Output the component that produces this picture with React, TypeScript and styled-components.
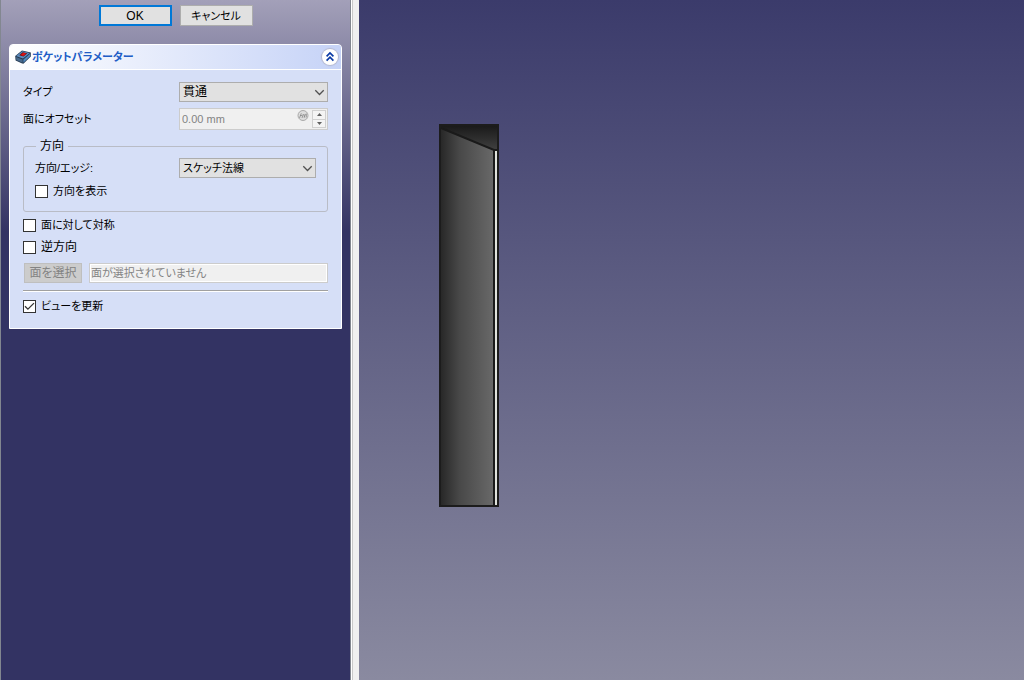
import React, { useState } from 'react';
import styled, { createGlobalStyle } from 'styled-components';

const Global = createGlobalStyle`
  * { box-sizing: border-box; }
  body {
    margin: 0;
    font-family: "Liberation Sans", "Noto Sans CJK JP", sans-serif;
    font-size: 11px;
    line-height: 16px;
    font-feature-settings: "palt";
    color: #000;
  }
  button, input, select {
    font: inherit;
    font-feature-settings: inherit;
    color: inherit;
    margin: 0;
  }
`;

const Window = styled.div`
  display: grid;
  grid-template-columns: minmax(300px, 351px) 8px minmax(0, 1fr);
  min-height: 100vh;
`;

const Sidebar = styled.aside`
  border-left: 1px solid #828790;
  border-right: 1px solid #828790;
  padding: 5px 8px 16px;
  background: linear-gradient(#a3a0b9 0, #333363 232px);
`;

const Splitter = styled.div`
  background: #f0f0f0;
  border-left: 1px solid #fff;
  box-shadow: inset 1px 0 #c8c8c8;
`;

const DialogButtons = styled.div`
  display: flex;
  justify-content: center;
  gap: 8px;
  margin-bottom: 18px;
`;

const PushButton = styled.button<{ $primary?: boolean }>`
  width: 73px;
  height: 21px;
  padding: 0;
  font-size: ${(p) => (p.$primary ? 12 : 11)}px;
  background: #e1e1e1;
  border: ${(p) => (p.$primary ? '2px solid #0078d7' : '1px solid #adadad')};
`;

const Panel = styled.section`
  border: 1px solid #fff;
  border-radius: 4px 4px 0 0;
  background: #d6dff7;
`;

const PanelHeader = styled.header`
  display: flex;
  align-items: center;
  gap: 1px;
  height: 25px;
  padding: 0 3px 0 5px;
  border-bottom: 1px solid #fff;
  border-radius: 3px 3px 0 0;
  background: linear-gradient(90deg, #fff, #c6d3f7);
`;

const PanelTitle = styled.h1`
  flex: 1;
  margin: 0;
  font-size: 11px;
  line-height: 16px;
  font-weight: 700;
  color: #215dc6;
`;

const CollapseButton = styled.button`
  display: flex;
  width: 16px;
  height: 16px;
  padding: 0;
  border: 0;
  border-radius: 50%;
  background: #fff;
  box-shadow: 0 0 1px 1px #b4b8d0;
`;

const Form = styled.form`
  padding: 12px 13px 14px;
`;

const Row = styled.div<{ $gap?: number }>`
  display: grid;
  grid-template-columns: 156px minmax(0, 1fr);
  align-items: center;
  margin-bottom: ${(p) => p.$gap ?? 0}px;
`;

const SelectBox = styled.div`
  display: grid;
  align-items: center;
  > * { grid-area: 1 / 1; }
  > svg { justify-self: end; margin-right: 3px; pointer-events: none; }
`;

const Select = styled.select<{ $large?: boolean }>`
  appearance: none;
  width: 100%;
  height: 20px;
  padding: 0 20px 0 3px;
  font-size: ${(p) => (p.$large ? 12 : 11)}px;
  border: 1px solid #adadad;
  border-radius: 0;
  background: #e1e1e1;
`;

const SpinBox = styled.div`
  display: flex;
  height: 22px;
  padding: 1px;
  border: 1px solid #ccc;
  background: #f0f0f0;
`;

const SpinInput = styled.input`
  flex: 1;
  min-width: 0;
  padding: 0 1px;
  border: 0;
  background: transparent;
  color: #838383;
`;

const SpinButtons = styled.div`
  display: flex;
  flex-direction: column;
  width: 14px;
  margin-left: 3px;
`;

const SpinButton = styled.button`
  display: flex;
  align-items: center;
  justify-content: center;
  flex: 1;
  min-height: 0;
  padding: 0;
  border: 1px solid #d0d0d0;
  background: #f4f4f4;
  & + & { border-top: 0; }
`;

const Group = styled.fieldset`
  min-width: 0;
  margin: 0 0 5px;
  padding: 4px 11px 12px;
  border: 1px solid #b9bcc6;
  border-radius: 3px;
`;

const Legend = styled.legend`
  margin-left: 1px;
  padding: 0 4px;
  font-size: 12px;
`;

const GroupRow = styled(Row)`
  grid-template-columns: 144px minmax(0, 1fr);
`;

const CheckLabel = styled.label<{ $gap?: number; $large?: boolean }>`
  display: flex;
  align-items: center;
  gap: 5px;
  height: 16px;
  margin-bottom: ${(p) => p.$gap ?? 0}px;
  font-size: ${(p) => (p.$large ? 12 : 11)}px;
`;

const CheckFrame = styled.span`
  display: grid;
  > * { grid-area: 1 / 1; }
  > svg { pointer-events: none; }
`;

const CheckInput = styled.input`
  appearance: none;
  width: 13px;
  height: 13px;
  border: 1px solid #333;
  background: #fff;
`;

const FaceRow = styled.div`
  display: flex;
  gap: 7px;
  padding-left: 1px;
`;

const FaceButton = styled.button`
  flex: 0 0 58px;
  height: 20px;
  padding: 0;
  font-size: 12px;
  border: 1px solid #bfbfbf;
  background: #ccc;
  color: #838383;
`;

const FaceInput = styled.input`
  flex: 1;
  min-width: 0;
  height: 20px;
  padding: 0 1px;
  border: 1px solid #ccc;
  background: #f0f0f0;
  box-shadow: inset 0 0 0 1px #fff;
  &::placeholder { color: #838383; opacity: 1; }
`;

const Divider = styled.hr`
  height: 2px;
  margin: 7px 0 6px;
  border: 0;
  border-top: 1px solid #a0a0a0;
  border-bottom: 1px solid #fff;
`;

const Viewport = styled.main`
  padding: 124px 80px;
  background: linear-gradient(#3b3b6b, #8a8aa0);
`;

const Solid = styled.svg`
  display: block;
`;

const Chevron = () => (
  <svg width="11" height="7" viewBox="0 0 11 7" fill="none" stroke="#505050" strokeWidth="1.3">
    <path d="M1.3 1.3 5.5 5.5 9.7 1.3" />
  </svg>
);

const PocketIcon = () => (
  <svg width="16" height="14" viewBox="0 0 16 14">
    <path d="M.2 6 7 .5 15.8 2.4V6.5L8.4 13.7 6.6 13.3.6 10.4Z" fill="#24384f" />
    <path d="M1 6.1 7.2 1.2 14.9 2.9 8 8.6Z" fill="#5b8dbf" />
    <path d="M1 7 7.6 9.6V12.8L1.3 9.9Z" fill="#47698c" />
    <path d="M8.4 9.4 15.1 3.7V6.2L8.4 12.7Z" fill="#4f88bf" />
    <path d="M4.2 5.2 7.6 2.2 12.2 3.3 8.5 6.6Z" fill="#5e1018" />
    <path d="M5.6 5 8.2 2.8 11.3 3.5 8.4 5.9Z" fill="#e01212" />
  </svg>
);

type CheckProps = { label: string; gap?: number; large?: boolean; initial?: boolean };

function Check({ label, gap, large, initial = false }: CheckProps) {
  const [on, setOn] = useState(initial);
  return (
    <CheckLabel $gap={gap} $large={large}>
      <CheckFrame>
        <CheckInput type="checkbox" checked={on} onChange={(e) => setOn(e.target.checked)} />
        {on && (
          <svg width="13" height="13" viewBox="0 0 13 13" fill="none" stroke="#333" strokeWidth="1.3">
            <path d="M2 6.3 4.9 9.2 11 3.1" />
          </svg>
        )}
      </CheckFrame>
      {label}
    </CheckLabel>
  );
}

export default function App() {
  return (
    <>
      <Global />
      <Window>
        <Sidebar>
          <DialogButtons>
            <PushButton $primary type="button">OK</PushButton>
            <PushButton type="button">キャンセル</PushButton>
          </DialogButtons>
          <Panel>
            <PanelHeader>
              <PocketIcon />
              <PanelTitle>ポケットパラメーター</PanelTitle>
              <CollapseButton type="button" aria-label="折りたたむ">
                <svg width="16" height="16" viewBox="0 0 16 16" fill="none" stroke="#0a3aa5" strokeWidth="1.7">
                  <path d="M4.6 7.4 8 4 11.4 7.4M4.6 11.6 8 8.2 11.4 11.6" />
                </svg>
              </CollapseButton>
            </PanelHeader>
            <Form>
              <Row $gap={6}>
                <label htmlFor="type">タイプ</label>
                <SelectBox>
                  <Select $large id="type"><option>貫通</option></Select>
                  <Chevron />
                </SelectBox>
              </Row>
              <Row $gap={8}>
                <label htmlFor="offset">面にオフセット</label>
                <SpinBox>
                  <SpinInput id="offset" disabled defaultValue="0.00 mm" />
                  <svg width="12" height="12" viewBox="0 0 12 12" fill="none" stroke="#aaa">
                    <circle cx="6" cy="5.5" r="5" fill="#ddd" />
                    <path d="M2.5 8 4.3 3.3M3 5.5H5M5 8 6.2 4.2M6.7 4 7.7 7.5M8.5 4 7 7.5M9.3 3.5V7.5" stroke="#888" strokeWidth=".8" />
                  </svg>
                  <SpinButtons>
                    <SpinButton type="button" disabled aria-label="増やす">
                      <svg width="5" height="3" viewBox="0 0 5 3"><path d="M0 3 2.5 0 5 3Z" fill="#606060" /></svg>
                    </SpinButton>
                    <SpinButton type="button" disabled aria-label="減らす">
                      <svg width="5" height="3" viewBox="0 0 5 3"><path d="M0 0 2.5 3 5 0Z" fill="#606060" /></svg>
                    </SpinButton>
                  </SpinButtons>
                </SpinBox>
              </Row>
              <Group>
                <Legend>方向</Legend>
                <GroupRow $gap={5}>
                  <label htmlFor="edge">方向/エッジ:</label>
                  <SelectBox>
                    <Select id="edge"><option>スケッチ法線</option></Select>
                    <Chevron />
                  </SelectBox>
                </GroupRow>
                <Check label="方向を表示" />
              </Group>
              <Check label="面に対して対称" gap={6} />
              <Check label="逆方向" gap={8} large />
              <FaceRow>
                <FaceButton type="button" disabled>面を選択</FaceButton>
                <FaceInput disabled aria-label="面" placeholder="面が選択されていません" />
              </FaceRow>
              <Divider />
              <Check label="ビューを更新" initial />
            </Form>
          </Panel>
        </Sidebar>
        <Splitter />
        <Viewport>
          <Solid width="60" height="383" viewBox="0 0 60 383" role="img" aria-label="ソリッド">
            <defs>
              <linearGradient id="face">
                <stop offset="0" stopColor="#282828" />
                <stop offset=".35" stopColor="#484848" />
                <stop offset="1" stopColor="#686868" />
              </linearGradient>
              <linearGradient id="cap" x2="0" y2="1">
                <stop offset="0" stopColor="#1a1a1a" />
                <stop offset="1" stopColor="#404040" />
              </linearGradient>
            </defs>
            <rect width="60" height="383" fill="#1c1c1c" />
            <path d="M2 2H58V26H55L2 4Z" fill="url(#cap)" />
            <path d="M2 4 54 26V381H2Z" fill="url(#face)" />
            <path d="M2 4 55 26H59" fill="none" stroke="#1a1a1a" strokeWidth="2" />
            <rect x="54" y="26" width="2" height="356" fill="#1a1a1a" />
            <rect x="56" y="27" width="2" height="354" fill="#e0e2dc" />
          </Solid>
        </Viewport>
      </Window>
    </>
  );
}
